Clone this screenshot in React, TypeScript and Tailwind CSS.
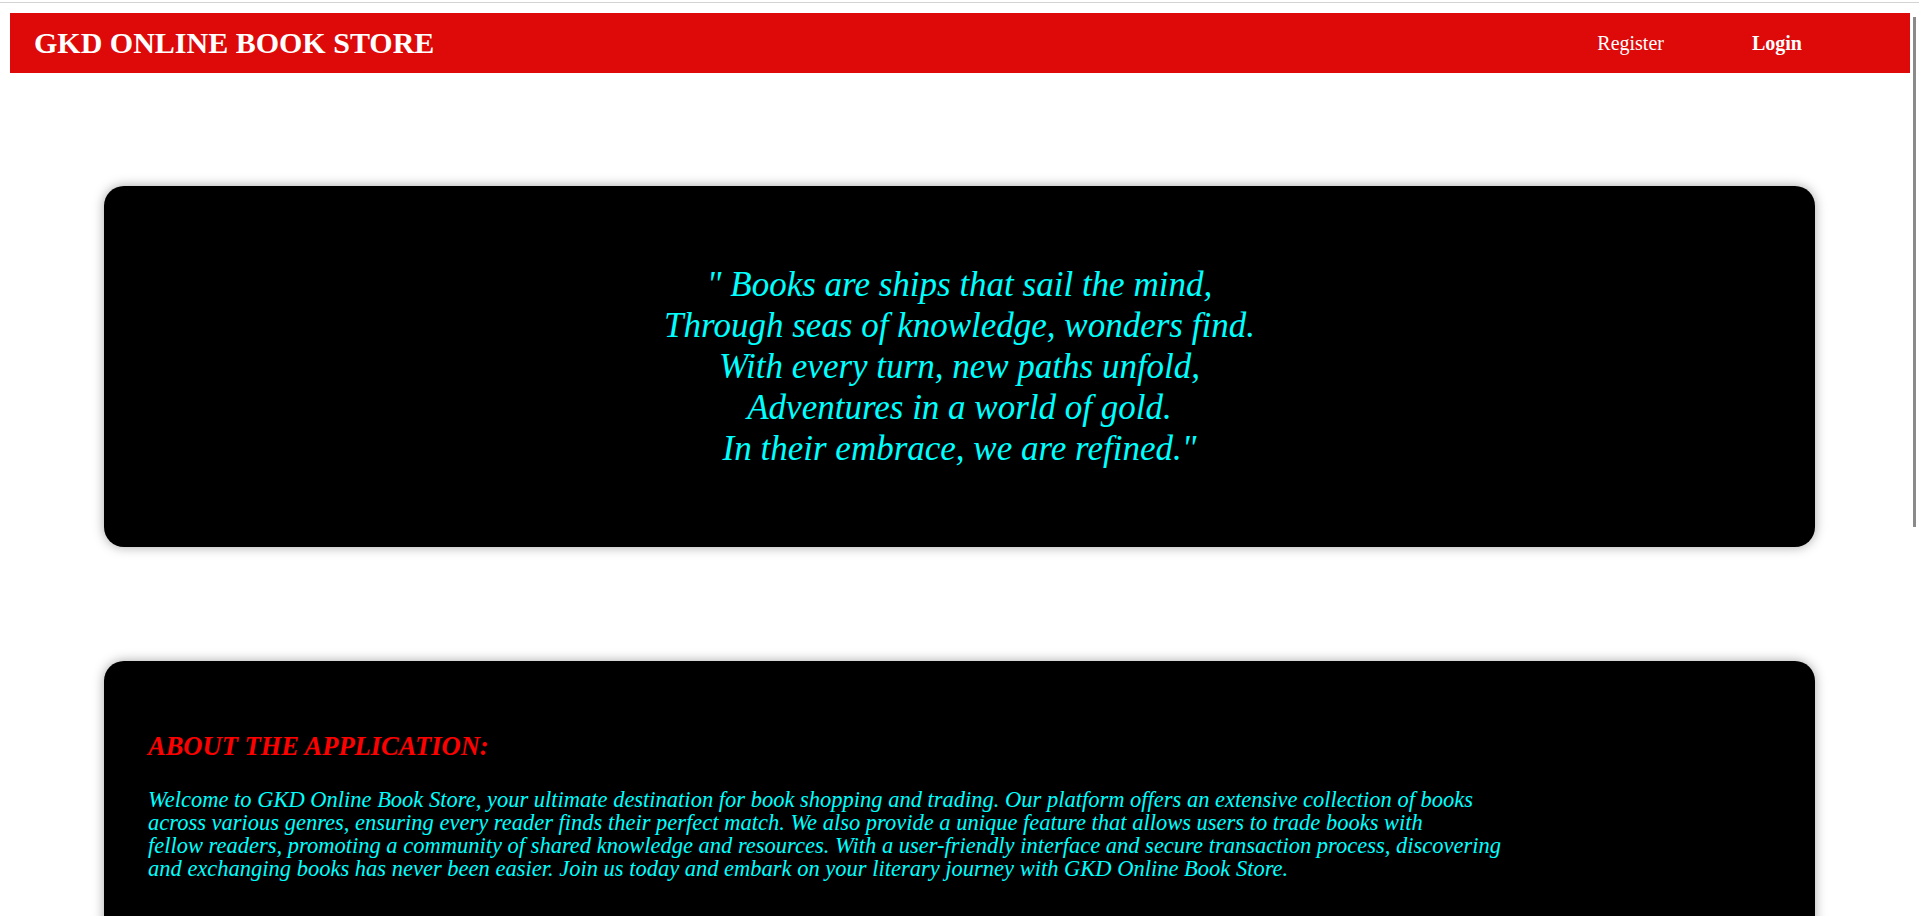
import React from "react";

const poem: string[] = [
  "\" Books are ships that sail the mind,",
  "Through seas of knowledge, wonders find.",
  "With every turn, new paths unfold,",
  "Adventures in a world of gold.",
  "In their embrace, we are refined.\"",
];

const about: string[] = [
  "Welcome to GKD Online Book Store, your ultimate destination for book shopping and trading. Our platform offers an extensive collection of books",
  "across various genres, ensuring every reader finds their perfect match. We also provide a unique feature that allows users to trade books with",
  "fellow readers, promoting a community of shared knowledge and resources. With a user-friendly interface and secure transaction process, discovering",
  "and exchanging books has never been easier. Join us today and embark on your literary journey with GKD Online Book Store.",
];

const App = () => {
  return (
    <div className="relative h-[916px] w-full overflow-hidden bg-white font-['Liberation_Serif','Times_New_Roman',serif]">
      <div className="mt-[2px] h-px w-full bg-[#d3d3d3]" />

      {/* scrollbar thumb */}
      <div className="absolute right-[3px] top-[17px] h-[510px] w-[3px] bg-[#8a8a8a]" />

      <header className="ml-[10px] mt-[10px] flex h-[60px] w-[1900px] items-center justify-between bg-[#de0909] text-white">
        <div className="pl-[24px] text-[30px] font-bold leading-none">GKD ONLINE BOOK STORE</div>
        <nav className="flex items-center gap-[88px] pr-[108px] text-[20px]">
          <a className="cursor-pointer">Register</a>
          <a className="cursor-pointer font-bold">Login</a>
        </nav>
      </header>

      <section className="mx-[104px] mt-[113px] flex h-[361px] flex-col items-center justify-center rounded-[20px] bg-black shadow-[0_0_12px_rgba(0,0,0,0.35)]">
        {poem.map((line: string, index: number) => (
          <div key={index} className="text-center text-[35px] italic leading-[41px] text-[#00ffff]">
            {line}
          </div>
        ))}
      </section>

      <section className="mx-[104px] mt-[114px] h-[400px] rounded-[20px] bg-black pl-[44px] pt-[70px] shadow-[0_0_12px_rgba(0,0,0,0.35)]">
        <h2 className="text-[26.5px] font-bold italic leading-[30.5px] text-[#ff0000]">ABOUT THE APPLICATION:</h2>
        <div className="mt-[26px] text-[22.5px] italic leading-[23.3px] text-[#00ffff]">
          {about.map((line: string, index: number) => (
            <div key={index}>{line}</div>
          ))}
        </div>
      </section>
    </div>
  );
};

export default App;
